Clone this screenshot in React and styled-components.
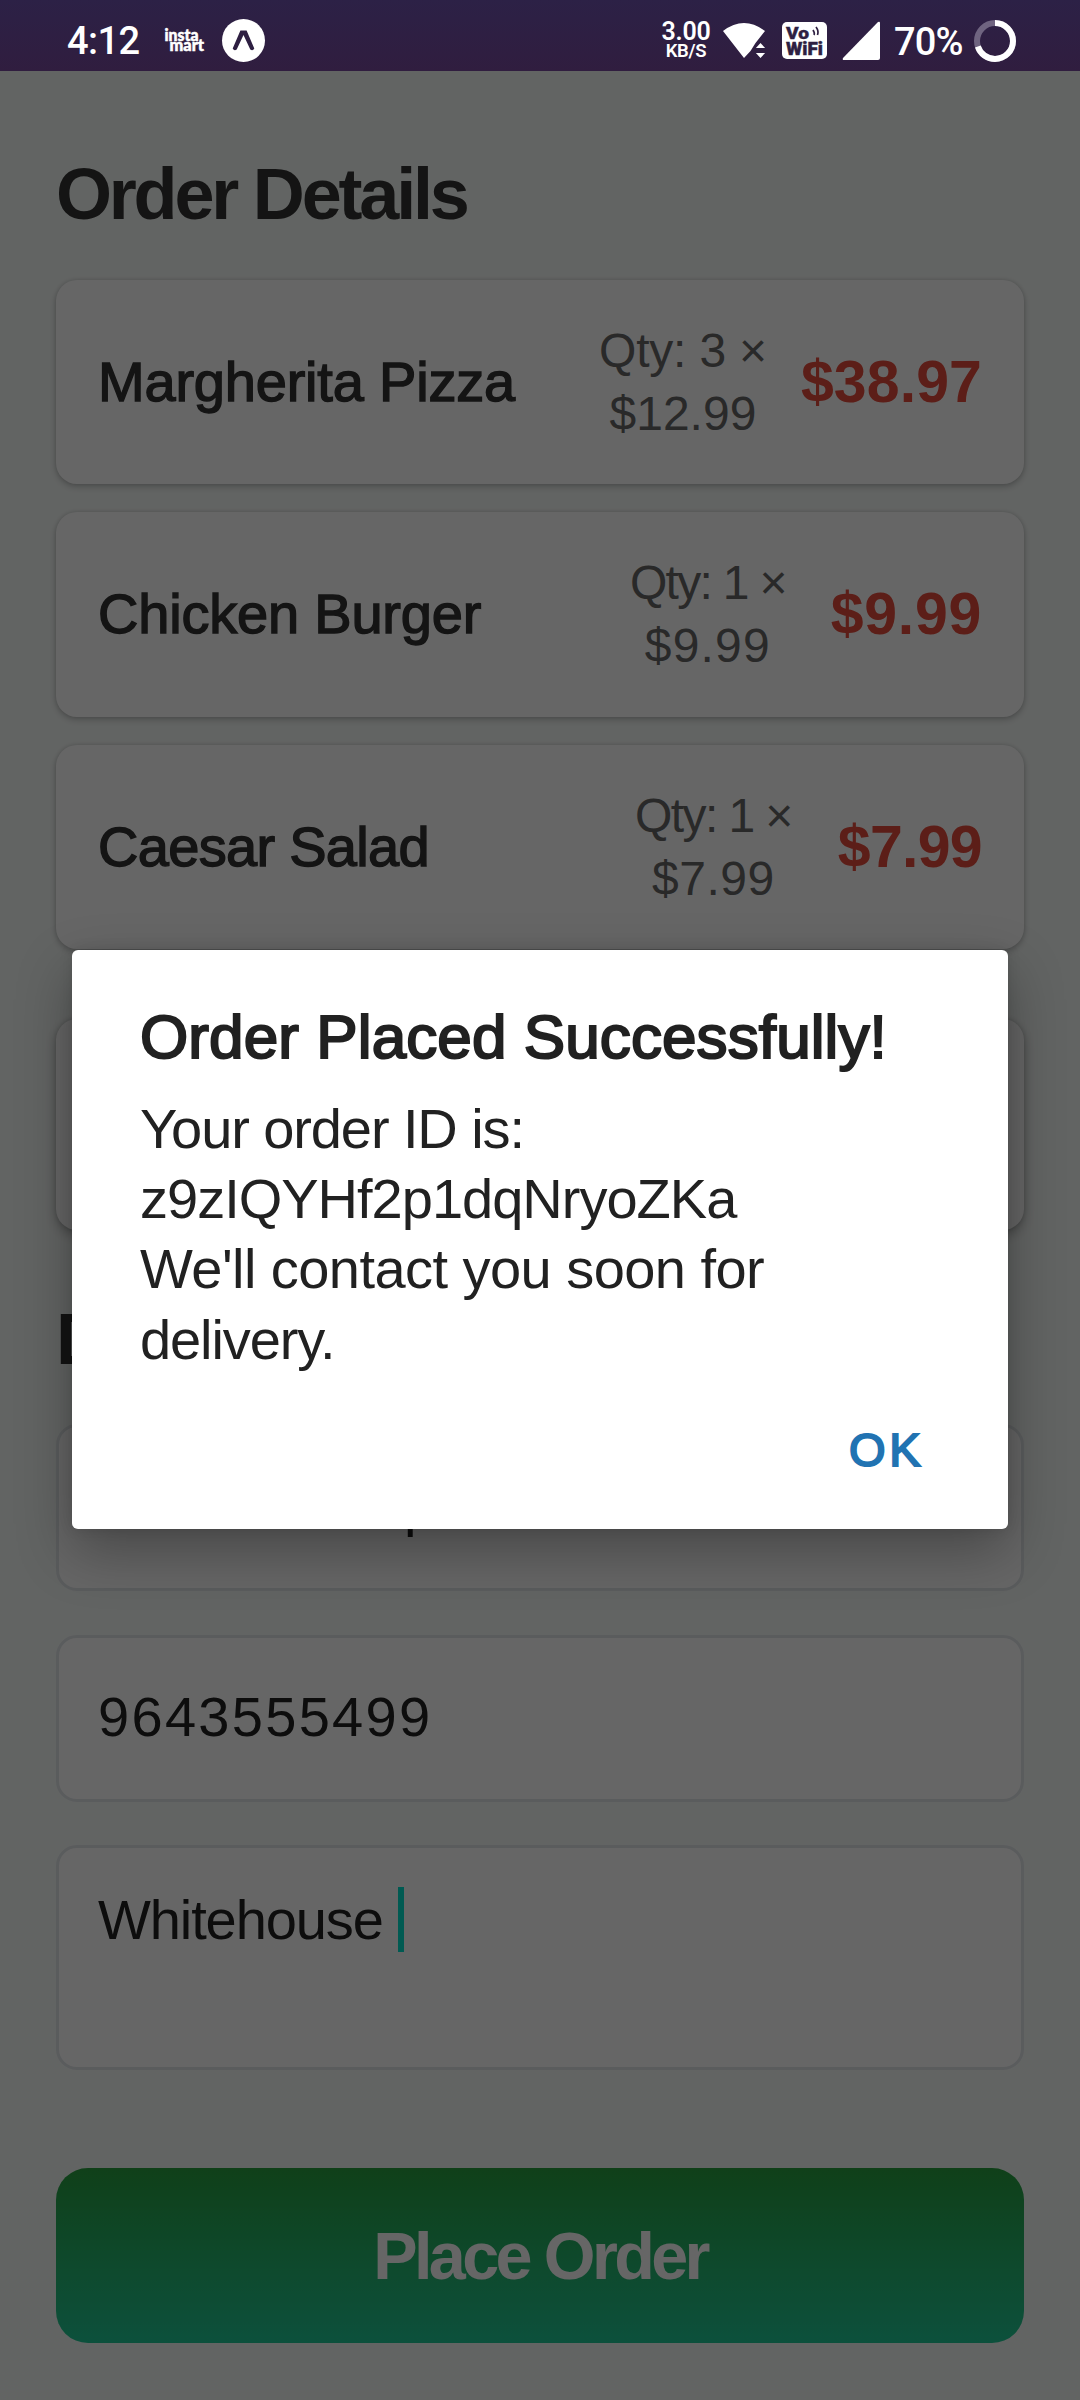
import React from "react";
import styled, { createGlobalStyle } from "styled-components";

const Global = createGlobalStyle`
  *{box-sizing:border-box}
  html,body{margin:0;padding:0;width:1080px;height:2400px;overflow:hidden;background:#626462}
  body{font-family:"Liberation Sans",Arial,sans-serif}
`;
const Screen = styled.div`
  position:relative;width:1080px;height:2400px;overflow:hidden;background:#f6faf8;
`;
const StatusBar = styled.header`
  position:absolute;inset:0 0 auto 0;z-index:3;height:71px;padding:0 64px 0 67px;
  display:flex;justify-content:space-between;align-items:center;color:#fff;
  background:linear-gradient(#2c2146,#301d3f);font-family:Roboto,sans-serif;
  svg{display:block;flex:none;overflow:visible}
`;
const StatusGroup = styled.div`
  display:flex;align-items:center;height:100%;padding-top:10px;
`;
const Clock = styled.span`
  font-size:38px;font-weight:500;line-height:40px;letter-spacing:-.6px;width:97px;
`;
const Speed = styled.span`
  display:flex;flex-direction:column;align-items:center;width:50px;font-weight:600;
  font-size:25px;line-height:20px;margin-right:12px;padding-top:1px;letter-spacing:-.3px;
  small{font-size:18.5px;line-height:18px}
`;
const Battery = styled.span`
  font-size:38px;font-weight:500;line-height:40px;width:68px;margin:2px 12px 0 14px;letter-spacing:-.9px;
`;
const Page = styled.main`
  padding:150px 56px 0;height:100%;display:flex;flex-direction:column;
`;
const Heading = styled.h1`
  margin:0;height:88px;line-height:88px;font-size:72px;font-weight:700;letter-spacing:-3.2px;color:#333;
`;
const SectionHeading = styled(Heading)`
  margin-top:65px;height:112px;
`;
const List = styled.section`
  display:flex;flex-direction:column;gap:28.2px;margin-top:41.8px;
`;
const Card = styled.article`
  height:204.3px;border-radius:21px;background:#fff;padding:0 42px;display:flex;align-items:center;
  box-shadow:0 3px 7px rgba(0,0,0,.2),0 0 4px rgba(0,0,0,.14);
`;
const ItemName = styled.div`
  flex:1;font-size:56px;line-height:70px;color:#333;-webkit-text-stroke:1.4px #333;
  letter-spacing:${p => p.$track}px;white-space:nowrap;
`;
const Quantity = styled.div`
  width:176px;font-size:48px;line-height:63px;text-align:center;color:#666;margin-right:${p => p.$gap}px;
`;
const QuantityLine = styled.span`
  display:block;white-space:nowrap;letter-spacing:${p => p.$track}px;
`;
const Price = styled.div`
  font-size:59px;line-height:70px;font-weight:700;color:#e74c3c;letter-spacing:${p => p.$track}px;
`;
const Total = styled(Card)`
  height:211px;margin-top:70px;justify-content:space-between;
  box-shadow:0 5px 12px rgba(0,0,0,.26),0 0 5px rgba(0,0,0,.16);
`;
const Form = styled.section`
  display:flex;flex-direction:column;gap:43.3px;margin-top:17.4px;
`;
const Field = styled.div`
  height:${p => p.$tall ? 225 : 167}px;border:3px solid #e1e5e9;border-radius:21px;background:#fff;
  padding:${p => p.$tall ? "39px" : "46px"} 39px;color:#212121;
  font-size:56px;line-height:65px;letter-spacing:${p => p.$track}px;display:flex;
`;
const Caret = styled.i`
  width:6px;height:65px;background:#00e0cc;margin-left:15px;
`;
const PlaceOrder = styled.button`
  margin:98px 0 0;height:175px;border:0;border-radius:32px;color:#fff;
  background:linear-gradient(#28a03f,#20c997);
  font:700 66.5px/76px "Liberation Sans",Arial,sans-serif;letter-spacing:-3.6px;
`;
const Scrim = styled.div`
  position:absolute;inset:71px 0 0;background:rgba(0,0,0,.6);
`;
const Dialog = styled.div`
  position:absolute;left:72px;top:950px;width:936px;height:579px;background:#fff;border-radius:6px;
  padding:50px 68px 0;color:#212121;box-shadow:0 22px 56px rgba(0,0,0,.3),0 0 14px rgba(0,0,0,.12);
  display:flex;flex-direction:column;
`;
const DialogTitle = styled.h2`
  margin:0;font-size:62px;font-weight:400;line-height:74px;-webkit-text-stroke:2.1px #212121;
  letter-spacing:.1px;white-space:nowrap;
`;
const Message = styled.p`
  margin:20px 0 0;font-size:56px;line-height:70.2px;
`;
const Line = styled.span`
  display:block;white-space:nowrap;letter-spacing:${p => p.$track}px;
`;
const OkButton = styled.button`
  align-self:flex-end;margin:45px 16px 0 0;padding:0;border:0;background:none;color:#2173b2;
  font:400 47px/60px "Liberation Sans",Arial,sans-serif;-webkit-text-stroke:2px #2173b2;letter-spacing:3.5px;
`;
const Space = styled.span`
  flex:none;width:${p => p.$w}px;
`;

const items = [
  { name: "Margherita Pizza", qty: 3, unit: "$12.99", price: "$38.97", gap: 30, nameTrack: -0.2, qtyTrack: -0.2, unitTrack: 0, priceTrack: 0.1 },
  { name: "Chicken Burger", qty: 1, unit: "$9.99", price: "$9.99", gap: 35, nameTrack: -0.2, qtyTrack: -1.7, unitTrack: 1.2, priceTrack: 0.7 },
  { name: "Caesar Salad", qty: 1, unit: "$7.99", price: "$7.99", gap: 36.5, nameTrack: -0.7, qtyTrack: -1.6, unitTrack: 0.5, priceTrack: -0.7 },
];

const InstamartIcon = () => (
  <svg width="42" height="26" viewBox="0 0 42 26" fill="#fff" stroke="#fff" strokeWidth=".5" fontFamily="Lato" fontWeight="900">
    <text x="0.500" y="13.300" fontSize="16" textLength="34" lengthAdjust="spacingAndGlyphs">insta</text>
    <text x="5.500" y="23.300" fontSize="16" textLength="34.500" lengthAdjust="spacingAndGlyphs">mart</text>
  </svg>
);
const ExpoIcon = () => (
  <svg width="43" height="43" viewBox="0 0 43 43">
    <circle cx="21.5" cy="21.5" r="21.5" fill="#fff" />
    <path d="M18.400 11.500h6.200L32.300 29.500q-1.500 3-4 1L21.500 16 14.700 30.500q-2.500 2-4-1Z" fill="#2e1f42" />
  </svg>
);
const WifiIcon = () => (
  <svg width="44" height="36" viewBox="0 0 44 36" fill="#fff">
    <path d="M0 8Q21-8 42 8L32.500 20l-5 8L21 35Z" />
    <path d="m37.500 18 7 8h-14Zm0 19-7-8h14Z" fill="#2e1f42" />
    <path d="m37.500 20 4.600 5h-9.200Zm0 15-4.600-5h9.200Z" />
  </svg>
);
const VoWifiIcon = () => (
  <svg width="45" height="37" viewBox="0 0 45 37">
    <rect width="45" height="37" rx="5" fill="#fff" />
    <g fill="#2e1f42" stroke="#2e1f42" strokeWidth=".4" fontFamily="Roboto" fontWeight="900">
      <text x="4" y="16.500" fontSize="17" textLength="23" lengthAdjust="spacingAndGlyphs">Vo</text>
      <text x="4" y="33" fontSize="18" textLength="37" lengthAdjust="spacingAndGlyphs">WiFi</text>
    </g>
    <path d="M31 8q2 3 1 5M34 5q3 4 1.500 8" fill="none" stroke="#2e1f42" strokeWidth="1.700" />
  </svg>
);
const SignalIcon = () => (
  <svg width="38" height="39" viewBox="0 0 38 39">
    <path d="M1 37 36 1q2-1 2 1v35q0 2-2 2H2q-2 0-1-2Z" fill="#fff" />
  </svg>
);
const BatteryRing = () => (
  <svg width="42" height="42" viewBox="0 0 42 42" fill="none" strokeWidth="6">
    <circle cx="21" cy="21" r="18" stroke="#6f6480" />
    <circle cx="21" cy="21" r="18" stroke="#fff" pathLength="100" strokeDasharray="70 30" transform="rotate(-90 21 21)" />
  </svg>
);

export default function App() {
  return (
    <Screen>
      <Global />
      <StatusBar>
        <StatusGroup>
          <Clock>4:12</Clock>
          <InstamartIcon />
          <Space $w={16} />
          <ExpoIcon />
        </StatusGroup>
        <StatusGroup>
          <Speed>3.00<small>KB/S</small></Speed>
          <WifiIcon />
          <Space $w={15} />
          <VoWifiIcon />
          <Space $w={15} />
          <SignalIcon />
          <Battery>70%</Battery>
          <BatteryRing />
        </StatusGroup>
      </StatusBar>
      <Page>
        <Heading>Order Details</Heading>
        <List>
          {items.map(item => (
            <Card key={item.name}>
              <ItemName $track={item.nameTrack}>{item.name}</ItemName>
              <Quantity $gap={item.gap}>
                <QuantityLine $track={item.qtyTrack}>Qty: {item.qty} ×</QuantityLine>
                <QuantityLine $track={item.unitTrack}>{item.unit}</QuantityLine>
              </Quantity>
              <Price $track={item.priceTrack}>{item.price}</Price>
            </Card>
          ))}
        </List>
        <Total />
        <SectionHeading as="h2">Delivery Details</SectionHeading>
        <Form>
          <Field $track={0.1}>Harshandeep</Field>
          <Field $track={2.3}>9643555499</Field>
          <Field $tall $track={-1.1}>Whitehouse<Caret /></Field>
        </Form>
        <PlaceOrder>Place Order</PlaceOrder>
      </Page>
      <Scrim />
      <Dialog>
        <DialogTitle>Order Placed Successfully!</DialogTitle>
        <Message>
          <Line $track={-1.1}>Your order ID is:</Line>
          <Line $track={-1}>z9zIQYHf2p1dqNryoZKa</Line>
          <Line $track={-0.55}>We'll contact you soon for</Line>
          <Line $track={-1.1}>delivery.</Line>
        </Message>
        <OkButton>OK</OkButton>
      </Dialog>
    </Screen>
  );
}
